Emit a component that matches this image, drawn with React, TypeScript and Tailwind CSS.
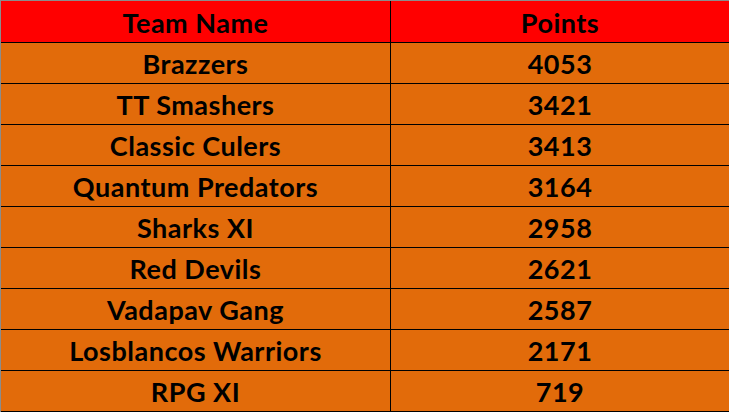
const teams = [
  { name: "Brazzers", points: 4053 },
  { name: "TT Smashers", points: 3421 },
  { name: "Classic Culers", points: 3413 },
  { name: "Quantum Predators", points: 3164 },
  { name: "Sharks XI", points: 2958 },
  { name: "Red Devils", points: 2621 },
  { name: "Vadapav Gang", points: 2587 },
  { name: "Losblancos Warriors", points: 2171 },
  { name: "RPG XI", points: 719 },
];

export default function App() {
  return (
    <div
      className="w-[729px] h-[412px] overflow-hidden bg-[#e26b0a] border-t border-l border-[#8c8c8c] text-black font-bold text-[27px] tracking-[0.5px]"
      style={{ fontFamily: "Lato, 'Liberation Sans', sans-serif" }}
    >
      <div className="flex h-[42px] bg-[#ff0000] border-b border-black">
        <div className="w-[390px] border-r border-black flex items-center justify-center pt-[3px]">Team Name</div>
        <div className="flex-1 flex items-center justify-center pt-[3px]">Points</div>
      </div>
      {teams.map((t) => (
        <div key={t.name} className="flex h-[41px] border-b border-black">
          <div className="w-[390px] border-r border-black flex items-center justify-center pt-[3px]">{t.name}</div>
          <div className="flex-1 flex items-center justify-center pt-[3px]">{t.points}</div>
        </div>
      ))}
    </div>
  );
}
